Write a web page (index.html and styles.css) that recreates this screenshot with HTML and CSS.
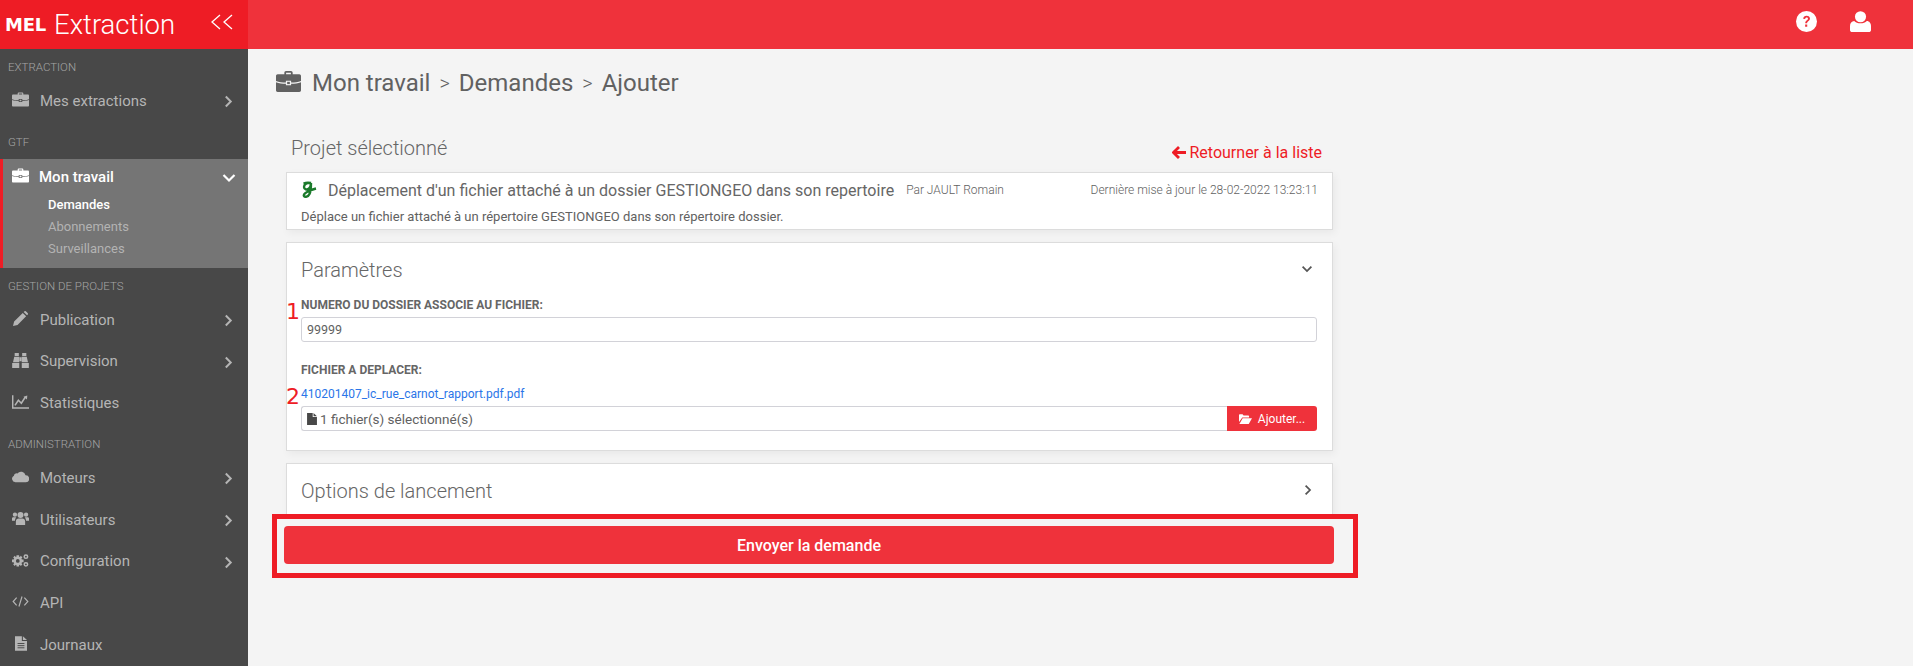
FILE: index.html
```html
<!DOCTYPE html>
<html lang="fr">

<head>
    <meta charset="UTF-8">
    <title>Extraction - Ajouter une demande</title>
    <link rel="stylesheet" href="styles.css">
</head>

<body>
    <svg class="defs" xmlns="http://www.w3.org/2000/svg">
        <symbol id="i-briefcase" viewBox="0 0 24 20">
            <path d="M8 3V1.600C8 .7 8.700 0 9.600 0h4.800c.9 0 1.600.7 1.600 1.600V3h6.400c.9 0 1.600.7 1.600 1.600V9.500C21 10.800 18 11 14.500 11V9.300h-5V11C6 11 3 10.800 0 9.500V4.600C0 3.700.7 3 1.600 3zM9.700 1.700V3h4.600V1.700z" />
            <path d="M0 10.800C3 12 6 12.200 9.500 12.200V13.500h5v-1.300C18 12.200 21 12 24 10.800v7.600c0 .9-.7 1.600-1.600 1.600H1.600C.7 20 0 19.300 0 18.400z" />
            <path d="M10.700 10.300h2.600v2.200h-2.600z" />
        </symbol>
        <symbol id="i-pencil" viewBox="0 0 20 20">
            <path d="M0 20l1.500-6L13 2.500l4.500 4.500L6 18.500zM14.200 1.300L15 .5c.7-.7 1.700-.7 2.400 0l2.100 2.100c.7.7.7 1.700 0 2.400l-.8.8z" />
        </symbol>
        <symbol id="i-binoculars" viewBox="0 0 20 18">
            <path d="M3 0h5v3.500H3zM12 0h5v3.500h-5zM2.500 4.500H8.500v6.500H1zM11.500 4.500h6l1.500 6.500h-7.500zM8.800 5h2.400v5H8.800zM0 12h8.500v6H0zM11.500 12H20v6h-8.500z" />
        </symbol>
        <symbol id="i-chart" viewBox="0 0 20 17">
            <path d="M0 1h1.700v14.300H20V17H0z" />
            <path d="M3.500 13l4-6 3.500 3.500 4.500-7" fill="none" stroke="currentColor" stroke-width="1.800" />
            <path d="M13.500 3l4.500-1.500-.4 4.500z" />
        </symbol>
        <symbol id="i-cloud" viewBox="0 0 22 15">
            <path d="M4.500 15A4.500 4.500 0 0 1 2.500 6.500 3.500 3.500 0 0 1 7 3.500 6 6 0 0 1 17.500 6 4.500 4.500 0 0 1 18 15z" />
        </symbol>
        <symbol id="i-users" viewBox="0 0 22 17">
            <circle cx="11" cy="4" r="3.900" />
            <circle cx="3.800" cy="3.500" r="2.800" />
            <circle cx="18.200" cy="3.500" r="2.800" />
            <path d="M5 17v-4.500C5 9.500 6.500 8.500 8.500 8.500h5c2 0 3.500 1 3.500 4V17zM0 11.500V8.500C0 7 1 6.800 2 6.800h3.500C5 7.500 4 9 3.800 11.500zM22 11.500V8.500C22 7 21 6.800 20 6.800h-3.500c.5.7 1.500 2.200 1.700 4.700z" />
        </symbol>
        <symbol id="i-cogs" viewBox="0 0 22 17">
            <circle cx="7.500" cy="9" r="4" fill="none" stroke="currentColor" stroke-width="3.200" />
            <path d="M5.800 1.800h3.400v3H5.800zM5.800 13.200h3.400v3H5.800zM0 7.300h3v3.400H0zM12 7.300h3v3.400h-3zM1.500 4.500L3.500 2.500 5.500 4.500 3.500 6.500zM9.500 4.500L11.500 2.500 13.500 4.500 11.500 6.500zM1.500 13.500L3.500 11.500 5.500 13.500 3.500 15.500zM9.500 13.500L11.500 11.500 13.500 13.500 11.500 15.500z" />
            <circle cx="18" cy="3.500" r="2.200" fill="none" stroke="currentColor" stroke-width="2" />
            <circle cx="18" cy="13.500" r="2.200" fill="none" stroke="currentColor" stroke-width="2" />
        </symbol>
        <symbol id="i-code" viewBox="0 0 22 14">
            <path d="M6 2L1.500 7 6 12M16 2l4.500 5L16 12M13 .5L9 13.500" fill="none" stroke="currentColor" stroke-width="1.500" />
        </symbol>
        <symbol id="i-file-text" viewBox="0 0 14 17">
            <path d="M0 0h8v5.500h6V17H0zM9.200 0L14 4.500H9.200z" />
            <path d="M3 8.500h8M3 11h8M3 13.500h8" stroke="#484848" stroke-width="1.100" />
        </symbol>
        <symbol id="i-file" viewBox="0 0 14 17">
            <path d="M0 0h8v5.500h6V17H0zM9.200 0L14 4.500H9.200z" />
        </symbol>
        <symbol id="i-folder" viewBox="0 0 20 15">
            <path d="M0 12V1.500C0 .7.700 0 1.500 0h4l1.500 2h7c.8 0 1.500.7 1.500 1.500V5H5L0 12z" />
            <path d="M5.700 6.200H20L15 15H.6z" />
        </symbol>
        <symbol id="i-right" viewBox="0 0 10 14">
            <path d="M2 1.500L7.500 7 2 12.500" fill="none" stroke="currentColor" stroke-width="2.200" />
        </symbol>
        <symbol id="i-down" viewBox="0 0 14 10">
            <path d="M1.500 2L7 7.500 12.500 2" fill="none" stroke="currentColor" stroke-width="2.200" />
        </symbol>
    </svg>

    <header class="topbar">
        <div class="brand">
            <span class="brand-logo">MEL</span>
            <span class="brand-name">Extraction</span>
            <svg class="brand-toggle" viewBox="0 0 24 16">
                <path d="M10 1L2 8l8 7M22 1l-8 7 8 7" fill="none" stroke="#fff" stroke-width="1.300" />
            </svg>
        </div>
        <div class="topbar-icons">
            <svg class="top-icon" viewBox="0 0 20 20">
                <circle cx="10" cy="10" r="10" fill="#fff" />
                <path d="M6.800 7.400C7 5.500 8.300 4.500 10.100 4.500c1.900 0 3.200 1.100 3.200 2.700 0 2.500-2.700 2.500-2.700 4.500H8.800c0-3 2.600-3 2.600-4.400 0-.7-.5-1.200-1.300-1.200-.8 0-1.300.5-1.500 1.500zM8.700 12.800h2v2.200h-2z" fill="#ef323b" />
            </svg>
            <svg class="top-icon" viewBox="0 0 20 20">
                <circle cx="10" cy="5.500" r="5.300" fill="#fff" />
                <path d="M0 18V14.500c0-3 1.700-5 4-5 1.300 1.300 3.500 2.200 6 2.200s4.700-.9 6-2.200c2.300 0 4 2 4 5V18c0 1.300-1 2-2 2H2c-1 0-2-.7-2-2z" fill="#fff" />
            </svg>
        </div>
    </header>

    <div class="layout">
        <nav class="sidebar">
            <div class="nav-title">EXTRACTION</div>
            <a class="nav-item"><svg class="nav-icon"><use href="#i-briefcase" /></svg>Mes extractions<svg class="nav-arrow"><use href="#i-right" /></svg></a>

            <div class="nav-title">GTF</div>
            <div class="nav-active">
                <a class="nav-item"><svg class="nav-icon"><use href="#i-briefcase" /></svg>Mon travail<svg class="nav-arrow nav-arrow-down"><use href="#i-down" /></svg></a>
                <a class="nav-sub current">Demandes</a>
                <a class="nav-sub">Abonnements</a>
                <a class="nav-sub">Surveillances</a>
            </div>

            <div class="nav-title">GESTION DE PROJETS</div>
            <a class="nav-item"><svg class="nav-icon"><use href="#i-pencil" /></svg>Publication<svg class="nav-arrow"><use href="#i-right" /></svg></a>
            <a class="nav-item"><svg class="nav-icon"><use href="#i-binoculars" /></svg>Supervision<svg class="nav-arrow"><use href="#i-right" /></svg></a>
            <a class="nav-item"><svg class="nav-icon"><use href="#i-chart" /></svg>Statistiques</a>

            <div class="nav-title">ADMINISTRATION</div>
            <a class="nav-item"><svg class="nav-icon"><use href="#i-cloud" /></svg>Moteurs<svg class="nav-arrow"><use href="#i-right" /></svg></a>
            <a class="nav-item"><svg class="nav-icon"><use href="#i-users" /></svg>Utilisateurs<svg class="nav-arrow"><use href="#i-right" /></svg></a>
            <a class="nav-item"><svg class="nav-icon"><use href="#i-cogs" /></svg>Configuration<svg class="nav-arrow"><use href="#i-right" /></svg></a>
            <a class="nav-item"><svg class="nav-icon"><use href="#i-code" /></svg>API</a>
            <a class="nav-item"><svg class="nav-icon nav-icon-small"><use href="#i-file-text" /></svg>Journaux</a>
        </nav>

        <main class="content">
            <h1 class="crumbs">
                <svg class="crumbs-icon"><use href="#i-briefcase" /></svg>
                <span>Mon travail</span><span class="sep">&gt;</span><span>Demandes</span><span class="sep">&gt;</span><span>Ajouter</span>
            </h1>

            <div class="column">
                <div class="project-head">
                    <h2>Projet sélectionné</h2>
                    <a class="back-link"><svg viewBox="0 0 14 13"><path d="M7 1L1.500 6.500 7 12M2 6.500h12" fill="none" stroke="currentColor" stroke-width="2.800" /></svg>Retourner à la liste</a>
                </div>

                <section class="card project-card">
                    <div class="project-line">
                        <svg class="project-logo" viewBox="0 0 16 18">
                            <path d="M2.500 2.500C5 1.500 8 1.500 10 2 6 1.500 3 3 3 6c0 2.500 3 3.200 5 1.500C9.500 6 10 4 10 2c0 5 0 8-1.500 11-1.300 2.800-4.500 3.500-5.500 2-1-1.800 2.500-4 6-5.500 2-.9 4-1.500 6-2" fill="none" stroke="#1b7a2b" stroke-width="2.400" />
                        </svg>
                        <span class="project-name">Déplacement d'un fichier attaché à un dossier GESTIONGEO dans son repertoire</span>
                        <span class="project-author">Par JAULT Romain</span>
                        <span class="project-date">Dernière mise à jour le 28-02-2022 13:23:11</span>
                    </div>
                    <p class="project-desc">Déplace un fichier attaché à un répertoire GESTIONGEO dans son répertoire dossier.</p>
                </section>

                <section class="card params-card">
                    <div class="card-head">
                        <h3>Paramètres</h3>
                        <svg class="card-toggle"><use href="#i-down" /></svg>
                    </div>
                    <div class="field field-first">
                        <span class="mark">1</span>
                        <label>NUMERO DU DOSSIER ASSOCIE AU FICHIER:</label>
                        <div class="input">99999</div>
                    </div>
                    <div class="field field-second">
                        <span class="mark">2</span>
                        <label>FICHIER A DEPLACER:</label>
                        <a class="file-link">410201407_ic_rue_carnot_rapport.pdf.pdf</a>
                        <div class="file-input">
                            <div class="file-name"><svg><use href="#i-file" /></svg>1 fichier(s) sélectionné(s)</div>
                            <div class="file-btn"><svg><use href="#i-folder" /></svg>Ajouter...</div>
                        </div>
                    </div>
                </section>

                <section class="card options-card">
                    <div class="card-head">
                        <h3>Options de lancement</h3>
                        <svg class="card-toggle card-toggle-right"><use href="#i-right" /></svg>
                    </div>
                </section>

                <div class="send-wrap">
                    <button class="send-btn">Envoyer la demande</button>
                </div>
            </div>
        </main>
    </div>
</body>

</html>
```

FILE: styles.css
```css
* {
    box-sizing: border-box;
}

html,
body {
    height: 100%;
}

body {
    margin: 0;
    overflow: hidden;
    font-family: Roboto, "Liberation Sans", sans-serif;
    background-color: #f4f4f4;
    color: #616161;
    display: flex;
    flex-direction: column;
}

.defs {
    display: none;
}

svg {
    fill: currentColor;
}

/* top bar */
.topbar {
    height: 49px;
    flex: none;
    display: flex;
    justify-content: space-between;
    background-color: #ef323b;
}

.brand {
    width: 248px;
    display: flex;
    align-items: center;
    padding-left: 5px;
    background-color: #ee1c25;
    color: #fff;
}

.brand-logo {
    width: 49px;
    font-family: "DejaVu Sans", sans-serif;
    font-weight: 700;
    font-size: 18px;
    letter-spacing: -0.2px;
}

.brand-name {
    font-weight: 300;
    font-size: 27.5px;
}

.brand-toggle {
    width: 24px;
    height: 16px;
    margin-left: 35px;
    margin-bottom: 6px;
}

.topbar-icons {
    display: flex;
    align-items: center;
    gap: 33px;
    padding-right: 42px;
    padding-bottom: 6px;
}

.top-icon {
    width: 21px;
    height: 21px;
}

/* side menu */
.layout {
    flex: 1;
    display: flex;
    min-height: 0;
}

.sidebar {
    width: 248px;
    flex: none;
    padding-top: 9px;
    background-color: #484848;
    color: #b5b5b5;
}

.nav-title {
    height: 18px;
    line-height: 18px;
    margin: 0 0 0 8px;
    font-weight: 300;
    font-size: 11.5px;
    color: #a5a5a5;
}

.nav-item {
    height: 41.6px;
    display: flex;
    align-items: center;
    position: relative;
    padding-left: 40px;
    font-size: 15px;
}

.nav-title+.nav-item {
    margin-top: 4px;
}

.nav-item+.nav-title {
    margin-top: 11.5px;
}

.nav-icon {
    position: absolute;
    left: 12px;
    top: 12px;
    width: 17px;
    height: 15px;
}

.nav-icon-small {
    left: 15px;
    width: 12px;
}

.nav-arrow {
    position: absolute;
    left: 224px;
    top: 15px;
    width: 9px;
    height: 13px;
}

.nav-arrow-down {
    left: 222px;
    top: 16px;
    width: 14px;
    height: 10px;
}

.nav-active {
    height: 109px;
    margin: 8px 0 9px;
    border-left: 3px solid #ee1c25;
    background-color: #757575;
    color: #fff;
}

.nav-active .nav-item {
    height: 35px;
    padding-left: 36px;
    font-weight: 500;
}

.nav-active .nav-icon {
    left: 9px;
    top: 9px;
}

.nav-active .nav-arrow-down {
    left: 219px;
    top: 14px;
}

.nav-sub {
    display: block;
    height: 22px;
    line-height: 22px;
    padding-left: 45px;
    font-size: 13px;
    color: #b3b3b3;
}

.nav-sub.current {
    color: #fff;
    font-weight: 500;
}

/* main part */
.content {
    flex: 1;
    min-width: 0;
    padding: 0 0 0 28px;
}

.crumbs {
    display: flex;
    align-items: center;
    height: 67px;
    margin: 0;
    font-weight: 400;
    font-size: 24px;
    color: #616161;
}

.crumbs-icon {
    width: 25px;
    height: 21px;
    margin-right: 11px;
    margin-bottom: 3px;
}

.sep {
    margin: 0 9px;
    font-size: 20px;
    font-weight: 300;
}

.column {
    width: 1047px;
    margin-left: 10px;
    position: relative;
}

.project-head {
    display: flex;
    justify-content: space-between;
    align-items: center;
    height: 56px;
    padding: 8px 11px 0 5px;
}

.project-head h2 {
    margin: 0;
    font-weight: 300;
    font-size: 20px;
    color: #666;
}

.back-link {
    display: flex;
    align-items: center;
    margin-top: 9px;
    font-size: 16px;
    color: #ee1c25;
}

.back-link svg {
    width: 14px;
    height: 13px;
    margin-right: 4px;
    fill: none;
}

.card {
    background-color: #fff;
    border: 1px solid #dcdcdc;
    box-shadow: 2px 3px 8px rgba(0, 0, 0, 0.05);
}

.project-card {
    height: 58px;
    padding: 0 14px 0 14px;
}

.project-line {
    display: flex;
    align-items: center;
    height: 34px;
}

.project-logo {
    width: 16px;
    height: 18px;
    margin-right: 11px;
    fill: none;
}

.project-name {
    font-size: 16px;
    color: #666;
}

.project-author {
    margin-left: 12px;
    font-weight: 300;
    font-size: 12px;
}

.project-date {
    margin-left: auto;
    font-weight: 300;
    font-size: 12px;
}

.project-desc {
    margin: 0;
    font-size: 13px;
    line-height: 20px;
}

.params-card {
    height: 209px;
    margin-top: 12px;
    padding: 0 15px 0 14px;
}

.card-head {
    display: flex;
    justify-content: space-between;
    align-items: center;
    height: 54px;
}

.card-head h3 {
    margin: 0;
    font-weight: 300;
    font-size: 20px;
    color: #666;
}

.card-toggle {
    width: 12px;
    height: 8px;
    margin-right: 4px;
    margin-bottom: 2px;
    color: #555;
}

.card-toggle-right {
    width: 8px;
    height: 12px;
    margin-right: 5px;
    color: #555;
}

.field {
    position: relative;
}

.field label {
    display: block;
    font-weight: 700;
    font-size: 12px;
    line-height: 16px;
    color: #666;
}

.field-first label {
    margin-bottom: 4px;
}

.field-second {
    margin-top: 20px;
}

.mark {
    position: absolute;
    left: -15px;
    font-family: "DejaVu Sans", sans-serif;
    font-size: 22px;
    line-height: 20px;
    color: #ee1c25;
}

.field-first .mark {
    top: 5px;
}

.field-second .mark {
    top: 25px;
}

.input {
    height: 25px;
    line-height: 23px;
    padding: 0 5px;
    font-size: 12.5px;
    border: 1px solid #d2d2d8;
    border-radius: 3px;
}

.file-link {
    display: block;
    margin: 8px 0 4px;
    font-size: 12px;
    line-height: 16px;
    color: #2a75e8;
}

.file-input {
    display: flex;
    height: 25px;
}

.file-name {
    flex: 1;
    display: flex;
    align-items: center;
    padding-left: 5px;
    font-size: 13.5px;
    border: 1px solid #d2d2d8;
    border-right: 0;
    border-radius: 3px 0 0 3px;
}

.file-name svg {
    width: 10px;
    height: 12px;
    margin-right: 3px;
    color: #484848;
}

.file-btn {
    width: 90px;
    display: flex;
    align-items: center;
    justify-content: center;
    font-size: 12px;
    color: #fff;
    background-color: #ef323b;
    border-radius: 0 3px 3px 0;
}

.file-btn svg {
    width: 13px;
    height: 10px;
    margin-right: 6px;
}

.options-card {
    height: 70px;
    margin-top: 12px;
}

.options-card .card-head {
    padding: 0 15px 0 14px;
}

/* red frame drawn over the button */
.send-wrap {
    position: absolute;
    left: -14px;
    top: 398px;
    width: 1086px;
    height: 64px;
    padding: 7px 19px 0 7px;
    border: 5px solid #ee1c25;
    background-color: #f4f4f4;
}

.send-btn {
    display: block;
    width: 1050px;
    height: 38px;
    border: 0;
    border-radius: 4px;
    font-family: Roboto, sans-serif;
    font-weight: 500;
    font-size: 16px;
    color: #fff;
    background-color: #ef323b;
}
```
